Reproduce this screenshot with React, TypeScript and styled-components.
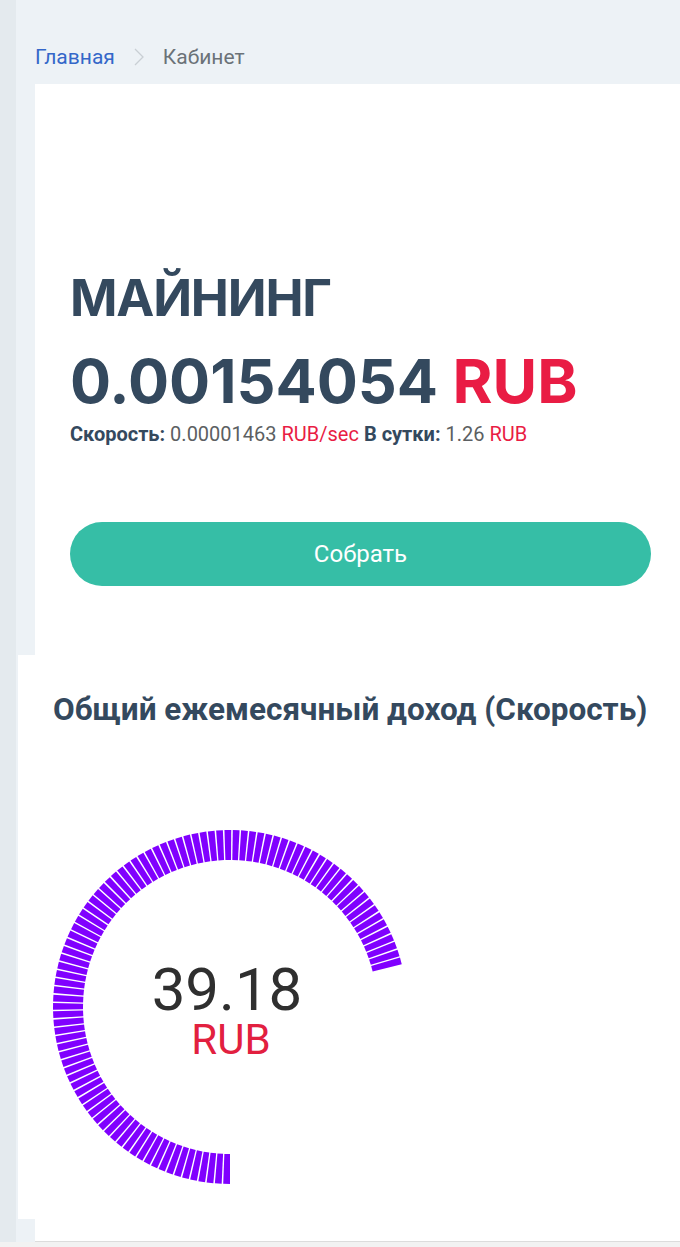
import React from "react";
import styled, { createGlobalStyle } from "styled-components";

const GlobalStyle = createGlobalStyle`
  html, body { margin: 0; padding: 0; }
  body {
    background: linear-gradient(to right, #e4eaee 0, #e4eaee 16px, #edf2f6 16px);
    font-family: Roboto, "Noto Sans", sans-serif;
    width: 680px;
    overflow: hidden;
  }
`;

const Page = styled.div`
  display: flex;
  flex-direction: column;
  min-height: 1247px;
`;

const Breadcrumbs = styled.nav`
  display: flex;
  align-items: center;
  height: 84px;
  padding: 30px 0 0 35px;
  box-sizing: border-box;
  font-size: 21px;
  gap: 19px;
`;

const Crumb = styled.span<{ $active?: boolean }>`
  color: ${(p) => (p.$active ? "#6b7278" : "#3467c9")};
`;

const Chevron = styled.span`
  display: flex;
  color: #c9cfd4;
`;

const MiningCard = styled.section`
  background: #fff;
  margin-left: 35px;
  padding: 182px 29px 69px 35px;
  display: flex;
  flex-direction: column;
`;

const Heading = styled.h1`
  margin: 0;
  font-family: Inter, "Noto Sans", sans-serif;
  font-weight: 700;
  font-size: 51px;
  line-height: 64px;
  color: #34495e;
  letter-spacing: -1.2px;
`;

const Balance = styled.div`
  font-family: Inter, "Noto Sans", sans-serif;
  font-weight: 700;
  font-size: 61px;
  line-height: 72px;
  color: #34495e;
  margin-top: 15px;
`;

const Red = styled.span`
  color: #e91c44;
`;

const Stats = styled.div`
  font-size: 20px;
  line-height: 24px;
  color: #5c5f62;
  margin-top: 5px;
`;

const Label = styled.b`
  color: #34495e;
  font-weight: 700;
`;

const CollectButton = styled.button`
  margin-top: 76px;
  height: 64px;
  width: 100%;
  border: none;
  border-radius: 32px;
  background: #36bea6;
  color: #fff;
  font-family: Roboto, sans-serif;
  font-size: 24px;
  cursor: pointer;
`;

const IncomeCard = styled.section`
  background: #fff;
  margin-left: 18px;
  padding: 35px 0 32px 35px;
  display: flex;
  flex-direction: column;
`;

const IncomeTitle = styled.h2`
  margin: 0;
  font-family: Roboto, sans-serif;
  font-weight: 700;
  font-size: 31.5px;
  line-height: 40px;
  color: #34495e;
  white-space: nowrap;
`;

const GaugeWrap = styled.div`
  margin-top: 97px;
  margin-left: -3px;
  display: flex;
`;

const BottomStrip = styled.div`
  margin-left: 35px;
  height: 22px;
  background: #fff;
  border-bottom: 1px solid #dcdcdc;
`;

const Rest = styled.div`
  flex: 1;
  background: #f2f2f2;
`;

function Gauge() {
  const cx = 180;
  const cy = 180;
  const rOut = 177;
  const rIn = 147;
  const step = 2.7;
  const gap = 0.5;
  const start = 180;
  const end = 437;
  const segs: string[] = [];
  const pt = (r: number, deg: number) => {
    const a = (deg * Math.PI) / 180;
    return `${(cx + r * Math.sin(a)).toFixed(2)},${(cy - r * Math.cos(a)).toFixed(2)}`;
  };
  for (let t = start; t + step - gap <= end + 0.01; t += step) {
    const a1 = t;
    const a2 = t + step - gap;
    segs.push([pt(rOut, a1), pt(rOut, a2), pt(rIn, a2), pt(rIn, a1)].join(" "));
  }
  return (
    <svg width="360" height="360" viewBox="0 0 360 360">
      {segs.map((p, i) => (
        <polygon key={i} points={p} fill="#8000ff" />
      ))}
      <text
        x={177}
        y={183}
        textAnchor="middle"
        fontFamily="Roboto, sans-serif"
        fontSize="60"
        fill="#2f2f2f"
      >
        39.18
      </text>
      <text
        x={181}
        y={227}
        textAnchor="middle"
        fontFamily="Roboto, sans-serif"
        fontSize="42"
        fill="#e2203f"
      >
        RUB
      </text>
    </svg>
  );
}

export default function App() {
  return (
    <>
      <GlobalStyle />
      <Page>
        <Breadcrumbs>
          <Crumb>Главная</Crumb>
          <Chevron>
            <svg width="10" height="18" viewBox="0 0 10 18">
              <path d="M1 1l8 8-8 8" fill="none" stroke="currentColor" strokeWidth="1.3" />
            </svg>
          </Chevron>
          <Crumb $active>Кабинет</Crumb>
        </Breadcrumbs>
        <MiningCard>
          <Heading>МАЙНИНГ</Heading>
          <Balance>
            0.00154054 <Red>RUB</Red>
          </Balance>
          <Stats>
            <Label>Скорость:</Label> 0.00001463 <Red>RUB/sec</Red>{" "}
            <Label>В сутки:</Label> 1.26 <Red>RUB</Red>
          </Stats>
          <CollectButton>Собрать</CollectButton>
        </MiningCard>
        <IncomeCard>
          <IncomeTitle>Общий ежемесячный доход (Скорость)</IncomeTitle>
          <GaugeWrap>
            <Gauge />
          </GaugeWrap>
        </IncomeCard>
        <BottomStrip />
        <Rest />
      </Page>
    </>
  );
}
